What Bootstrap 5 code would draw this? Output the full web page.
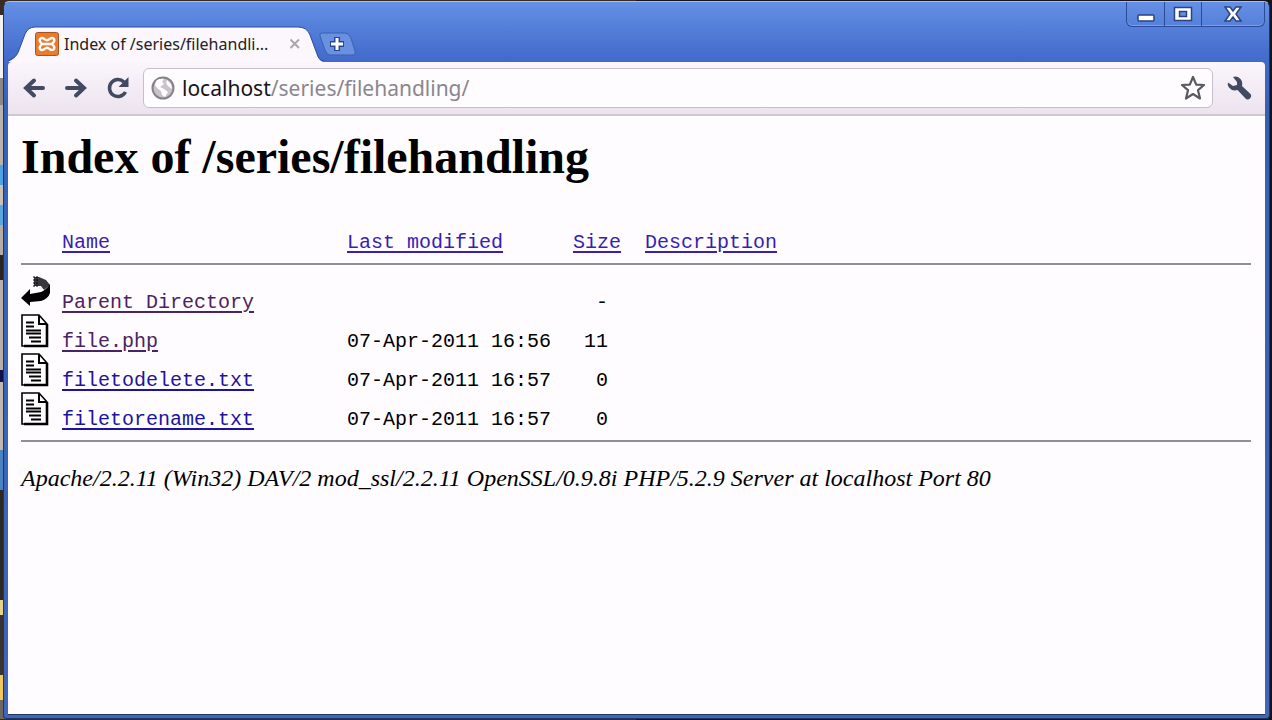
<!DOCTYPE html>
<html lang="en">
<head>
<meta charset="utf-8">
<meta name="viewport" content="width=device-width, initial-scale=1">
<title>Index of /series/filehandling</title>
<link rel="stylesheet" href="https://cdn.jsdelivr.net/npm/bootstrap@5.3.0/dist/css/bootstrap.min.css">
<style>
  body {
    font-family: "Noto Sans", "Open Sans", sans-serif;
    background: linear-gradient(90deg, transparent 50%, #15131c 50%),
      linear-gradient(#3a2a24 0 15px, #f4f1ee 15px 78px, #8d8783 78px 105px, #b9b2ac 105px 165px, #4ea3e0 165px 185px, #c9c1b8 185px 205px, #58a9dd 205px 225px, #b5aca4 225px 255px, #2a2523 255px 280px, #b8b0a8 280px 370px, #12124a 370px 382px, #c0b8b0 382px 450px, #4b82c0 450px 490px, #2d2826 490px 600px, #e9d38a 600px 615px, #393431 615px 675px, #f2c75c 675px 700px, #6d675f 700px);
  }
  .window {
    margin: 1px 2px 0 3px;
    padding: 0 4px 3px;
    border: 1px solid #22345f;
    border-top-color: #a8c0f0;
    border-radius: 6px 6px 4px 4px;
    background: linear-gradient(#6690e6 0, #5580da 24px, #4069cb 60px, #3560b5 110px, #3f66b8 100%);
  }
  .titlebar { height: 60px; }
  .tab-item { width: 316px; height: 36px; padding: 0 20px 0 27px; }
  .tab-shape { left: 0; top: 0; z-index: -1; }
  .tab-strip { z-index: 0; padding-top: 24px; }
  .tab-title { font-size: 16px; line-height: 24px; color: #222; margin-left: 5px; width: 217px; }
  .plain { border: 0; padding: 0; background: none; display: flex; align-items: center; justify-content: center; color: #414a61; }
  .new-tab { margin: 6px 0 0 -6px; height: 24px; }
  .caption-set { height: 25px; border: 1px solid #2b4a97; border-top: 0; border-radius: 0 0 6px 6px; box-shadow: inset 0 -1px #7c9fe8; }
  .caption-set button { width: 37px; }
  .caption-set button + button { border-left: 1px solid #2b4a97; }
  .caption-set button:last-child { width: 63px; }
  .toolbar {
    padding: 6px 12px 6px 14px;
    background: linear-gradient(#fbf5fc, #ece3ee);
    border-bottom: 2px solid #cfc7d1;
    border-radius: 4px 4px 0 0;
  }
  .nav-set { gap: 18px; margin-right: 13px; }
  .address { height: 40px; background: #fefcff; border: 1px solid #c6bfc9; border-radius: 6px; padding: 0 6px; }
  .address-text { position: relative; font-size: 21px; line-height: 30px; margin-left: 6px; }
  .address-text input { position: absolute; inset: 0; width: 100%; border: 0; padding: 0; background: none; color: transparent; outline: 0; }
  .host { color: #161418; }
  .route { color: #8a868c; }
  .wrench { margin-left: 12px; }
  .page { min-height: calc(100vh - 121px); background: #fefcff; border-bottom: 1px solid #22345f; padding: 13px 14px 24px 13px; color: #000; }
  h1 { font: bold 48px/56px "Liberation Serif", serif; margin: 0 0 47px; }
  .listing { width: 100%; font: 20px/22px "Liberation Mono", monospace; table-layout: fixed; }
  .listing th { font-weight: 400; padding: 0 0 9px; }
  .listing thead, .listing tbody { border-bottom: 2px solid #918f95; }
  .listing td { padding: 0; height: 39px; vertical-align: bottom; }
  .listing tbody tr:first-child td { height: 50px; }
  .listing tbody tr:last-child td { height: 48px; padding-bottom: 9px; }
  .listing svg { display: block; margin-bottom: 5px; }
  .listing .amount { text-align: right; padding-right: 37px; }
  .listing a { color: #1c14a0; text-decoration-thickness: 2px; text-underline-offset: 3px; }
  .listing a.seen { color: #4b2360; }
  .listing thead a { color: #3a1eb0; }
  .col-icon { width: 41px; } .col-name { width: 285px; } .col-date { width: 226px; } .col-size { width: 72px; }
  address { font: italic 24px/30px "Liberation Serif", serif; margin: 21px 0 0; }
</style>
</head>
<body>
<svg width="0" height="0" class="position-absolute" aria-hidden="true">
  <symbol id="doc" viewBox="0 0 28 34">
    <path d="M1 1H18L26 10V32H1Z" fill="#fff" stroke="#000" stroke-width="1.6"/>
    <path d="M26 10V32H3" fill="none" stroke="#000" stroke-width="2.600"/>
    <path d="M18 1V10H26" fill="none" stroke="#000" stroke-width="2"/>
    <path d="M5 8.500H13M5 12.500H13M5 16.500H20M5 19.500H20M8 23.500H20M10 27.500H20" stroke="#000" stroke-width="1.900"/>
  </symbol>
</svg>
<div class="window">
  <header class="titlebar d-flex justify-content-between align-items-start">
    <div class="tab-strip d-flex align-items-start position-relative">
      <div class="tab-item d-flex align-items-center position-relative">
        <svg class="tab-shape position-absolute" width="316" height="36" viewBox="0 0 316 36" aria-hidden="true">
          <path d="M0 36C6 33 9 30 11 24L17 8Q20 1 27 1H290Q299 1 302 9L309 28Q311 35 316 36Z" fill="#fcf7fd"/>
          <path d="M0 35C6 32 9 30 11 24L17 8Q20 1 27 1H290Q299 1 302 9L309 28Q311 35 316 35" fill="none" stroke="#2d4c98"/>
        </svg>
        <svg width="24" height="24" viewBox="0 0 24 24" aria-hidden="true">
          <rect x=".5" y=".5" width="23" height="23" rx="2" fill="#ea7a2c" stroke="#a95420"/>
          <path d="M9.500 7C6 4.500 4 7 5 9.500Q5.500 11 7.500 12Q5.500 13 5 14.500C4 17 6 19.500 9.500 17M14.500 7C18 4.500 20 7 19 9.500Q18.500 11 16.500 12Q18.500 13 19 14.500C20 17 18 19.500 14.500 17M9.500 7Q12 9.500 14.500 7M9.500 17Q12 14.500 14.500 17M8 12H16" fill="none" stroke="#fff" stroke-width="2.400"/>
        </svg>
        <span class="tab-title text-nowrap overflow-hidden">Index of /series/filehandli...</span>
        <button class="plain ms-2" type="button" aria-label="Close tab"><svg width="12" height="12" viewBox="0 0 12 12"><path d="M1.500 1.500L10 10M10 1.500L1.500 10" stroke="#aaa6ad" stroke-width="2"/></svg></button>
      </div>
      <button class="plain new-tab" type="button" aria-label="New tab"><svg width="38" height="24" viewBox="0 0 38 24"><path d="M4 1H27Q31 1 33 6L37 19Q38 23 34 23H12Q9 23 7 18L2 4Q1 1 4 1Z" fill="#6a90e2" stroke="#3c60b2"/><path d="M19 5V19M12 12H26" stroke="#27488f" stroke-width="6"/><path d="M19 6V18M13 12H25" stroke="#fff" stroke-width="3"/></svg></button>
    </div>
    <div class="caption-set d-flex">
      <button class="plain" type="button" aria-label="Minimize"><svg width="20" height="20" viewBox="0 0 20 20"><rect x="2" y="11" width="16" height="6" rx="1" fill="#fff" stroke="#2a437f" stroke-width="1.500"/></svg></button>
      <button class="plain" type="button" aria-label="Maximize"><svg width="20" height="20" viewBox="0 0 20 20"><path d="M1.500 3.500H18.500V16.500H1.500Z" fill="#fff" stroke="#2a437f" stroke-width="1.500"/><rect x="6.500" y="7.500" width="7" height="5" fill="#6a8fdd" stroke="#2a437f" stroke-width="1.500"/></svg></button>
      <button class="plain" type="button" aria-label="Close"><svg width="20" height="20" viewBox="0 0 20 20"><path d="M2 3H7L10 7L13 3H18L13 10L18 17H13L10 13L7 17H2L7 10Z" fill="#fff" stroke="#2a437f" stroke-width="1.500"/></svg></button>
    </div>
  </header>
  <nav class="toolbar d-flex align-items-center" aria-label="Browser">
    <div class="nav-set d-flex">
      <button class="plain" type="button" aria-label="Back"><svg width="24" height="24" viewBox="0 0 24 24"><path d="M21 12H4M12 4.500L4 12L12 19.500" fill="none" stroke="currentColor" stroke-width="4" stroke-linecap="round"/></svg></button>
      <button class="plain" type="button" aria-label="Forward"><svg width="24" height="24" viewBox="0 0 24 24"><path d="M3 12H20M12 4.500L20 12L12 19.500" fill="none" stroke="currentColor" stroke-width="4" stroke-linecap="round"/></svg></button>
      <button class="plain" type="button" aria-label="Reload"><svg width="24" height="24" viewBox="0 0 24 24"><path d="M18 6A8.500 8.500 0 1 0 19.500 16" fill="none" stroke="currentColor" stroke-width="3.500"/><path d="M22.500 1V11H12.500Z" fill="currentColor"/></svg></button>
    </div>
    <div class="address d-flex align-items-center flex-grow-1">
      <svg width="26" height="26" viewBox="0 0 26 26" aria-hidden="true"><circle cx="13" cy="13" r="10.500" fill="#c8c3ca" stroke="#858187" stroke-width="2"/><path d="M6 6Q9 3 14 4L12 7L14 9L10 12L14 14L18 17L15 22L12 20L11 16L7 13L5 10ZM17 5L21 9L22 14L18 11L16 8Z" fill="#fff"/></svg>
      <label class="address-text flex-grow-1"><span class="host">localhost</span><span class="route">/series/filehandling/</span><input type="text" aria-label="Address"></label>
      <button class="plain" type="button" aria-label="Bookmark"><svg width="26" height="26" viewBox="0 0 26 26"><path d="M13 2L16.200 9.600L24 10L18 15.200L20 23.500L13 19L6 23.500L8 15.200L2 10L9.800 9.600Z" fill="#fff" stroke="#5b5862" stroke-width="2.200" stroke-linejoin="round"/></svg></button>
    </div>
    <button class="plain wrench" type="button" aria-label="Settings"><svg width="28" height="28" viewBox="0 0 28 28"><path d="M8 3Q12 1.500 15.500 5Q18 8 17 12L25.500 20Q27 22 25 24.500Q22.500 26.500 20.500 24.500L12.500 16Q7 17.500 4 13.500Q2 11 3 8.500L8 12L12 11V8Z" fill="currentColor"/></svg></button>
  </nav>
  <main class="page">
    <h1>Index of /series/filehandling</h1>
    <table class="listing">
      <colgroup><col class="col-icon"><col class="col-name"><col class="col-date"><col class="col-size"><col></colgroup>
      <thead>
        <tr><th></th><th><a href="#name">Name</a></th><th><a href="#modified">Last modified</a></th><th><a href="#size">Size</a></th><th><a href="#description">Description</a></th></tr>
      </thead>
      <tbody>
        <tr><td><svg width="30" height="34" viewBox="0 0 30 34" aria-hidden="true"><path d="M13 2H18L25 5L29 10L23 15L20 11L13 11Z" fill="#38353b"/><path d="M29 9V18Q27 24 20 26L9 27V31L0 23L9 14V19L20 17Q25 15 29 9Z" fill="#000"/><path d="M13 1V12M16 1V12" stroke="#000" stroke-dasharray="2 1"/><path d="M18 13H21L23 15" stroke="#ddd" fill="none"/></svg></td><td><a class="seen" href="#parent">Parent Directory</a></td><td></td><td class="amount">-</td><td></td></tr>
        <tr><td><svg width="28" height="34" aria-hidden="true"><use href="#doc"/></svg></td><td><a class="seen" href="#file">file.php</a></td><td>07-Apr-2011 16:56</td><td class="amount">11</td><td></td></tr>
        <tr><td><svg width="28" height="34" aria-hidden="true"><use href="#doc"/></svg></td><td><a href="#delete">filetodelete.txt</a></td><td>07-Apr-2011 16:57</td><td class="amount">0</td><td></td></tr>
        <tr><td><svg width="28" height="34" aria-hidden="true"><use href="#doc"/></svg></td><td><a href="#rename">filetorename.txt</a></td><td>07-Apr-2011 16:57</td><td class="amount">0</td><td></td></tr>
      </tbody>
    </table>
    <address>Apache/2.2.11 (Win32) DAV/2 mod_ssl/2.2.11 OpenSSL/0.9.8i PHP/5.2.9 Server at localhost Port 80</address>
  </main>
</div>
<script src="https://cdn.jsdelivr.net/npm/bootstrap@5.3.0/dist/js/bootstrap.bundle.min.js"></script>
</body>
</html>
